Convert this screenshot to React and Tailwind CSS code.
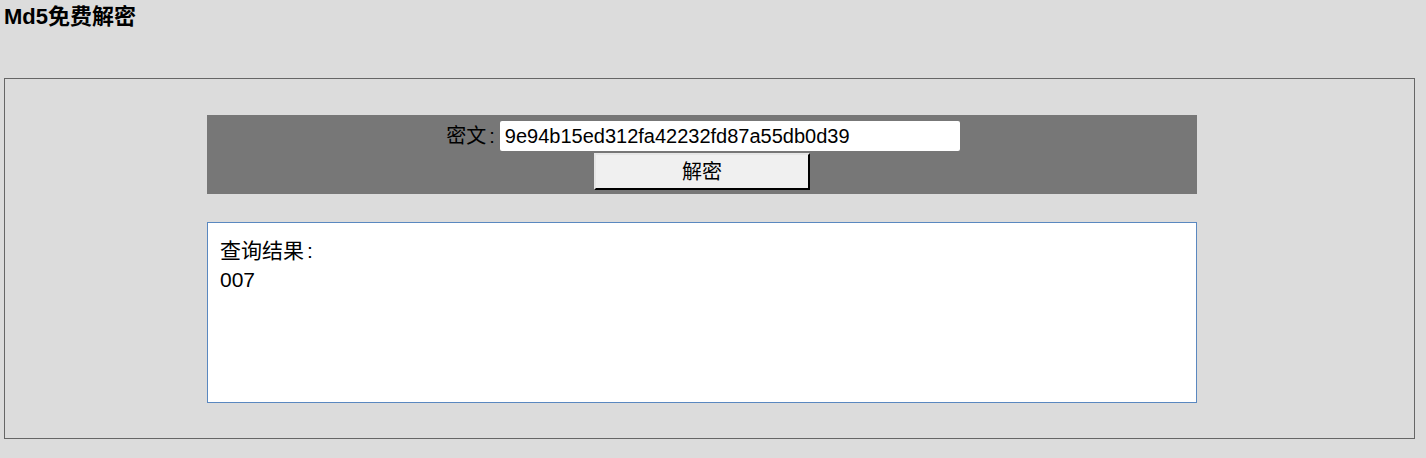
import React from "react";

const App = () => {
  return (
    <div
      className="w-[1426px] h-[458px] bg-[#dcdcdc] text-black overflow-hidden"
      style={{ fontFamily: '"Liberation Sans", "Noto Sans CJK SC", sans-serif' }}
    >
      <h3 className="pl-[4px] pt-[5px] text-[22px] leading-[24px] font-bold">Md5免费解密</h3>

      <div className="mt-[49px] ml-[4px] w-[1411px] h-[361px] border border-[#666666] pt-[36px] pl-[202px]">
        {/* form bar */}
        <div className="w-[990px] h-[79px] bg-[#777777] flex flex-col items-center pt-[6px]">
          <div className="flex items-center h-[30px] pl-[2px]">
            <span className="text-[20px] mr-[5px]">
              密文<span className="pl-[3px]">:</span>
            </span>
            <input
              type="text"
              defaultValue="9e94b15ed312fa42232fd87a55db0d39"
              className="w-[460px] h-[30px] bg-white rounded-[2px] px-[5px] text-[20px] outline-none"
            />
          </div>
          <button className="mt-[2px] w-[216px] h-[37px] bg-[#f0f0f0] text-[20px] border-2 border-t-[#e6e6e6] border-l-[#e6e6e6] border-b-black border-r-black">
            解密
          </button>
        </div>

        {/* result */}
        <div className="mt-[28px] w-[990px] h-[181px] bg-white border border-[#5a88c0] px-[12px] pt-[13px] text-[21px] leading-[29px]">
          <div>
            查询结果<span className="pl-[3px]">:</span>
          </div>
          <div>007</div>
        </div>
      </div>
    </div>
  );
};

export default App;
